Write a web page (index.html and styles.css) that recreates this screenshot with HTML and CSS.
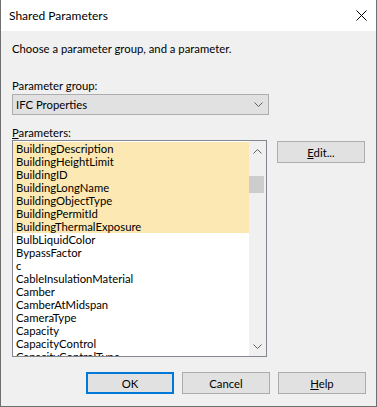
FILE: index.html
```html
<!DOCTYPE html>
<html lang="en">
<head>
    <meta charset="utf-8">
    <title>Shared Parameters</title>
    <link rel="stylesheet" href="styles.css">
</head>
<body>
    <div class="window">
        <header class="titlebar">
            <span class="title">Shared Parameters</span>
            <svg class="close" width="11" height="11" viewBox="0 0 11 11">
                <path d="M0.5 0.5 L10.5 10.5 M10.5 0.5 L0.5 10.5" stroke="#000" stroke-width="1" fill="none"/>
            </svg>
        </header>

        <main class="content">
            <p class="prompt">Choose a parameter group, and a parameter.</p>

            <label class="caption group-caption">Parameter <u>g</u>roup:</label>
            <div class="select">
                <span>IFC Properties</span>
                <svg width="9" height="5" viewBox="0 0 9 5">
                    <path d="M0.5 0.5 L4.5 4.5 L8.5 0.5" stroke="#606060" fill="none"/>
                </svg>
            </div>

            <label class="caption list-caption"><u>P</u>arameters:</label>
            <div class="row">
                <div class="listbox">
                    <ul class="items">
                        <li class="sel">BuildingDescription</li>
                        <li class="sel">BuildingHeightLimit</li>
                        <li class="sel">BuildingID</li>
                        <li class="sel">BuildingLongName</li>
                        <li class="sel">BuildingObjectType</li>
                        <li class="sel">BuildingPermitId</li>
                        <li class="sel">BuildingThermalExposure</li>
                        <li>BulbLiquidColor</li>
                        <li>BypassFactor</li>
                        <li>c</li>
                        <li>CableInsulationMaterial</li>
                        <li>Camber</li>
                        <li>CamberAtMidspan</li>
                        <li>CameraType</li>
                        <li>Capacity</li>
                        <li>CapacityControl</li>
                        <li>CapacityControlType</li>
                    </ul>
                    <div class="scrollbar">
                        <svg class="arrow" width="9" height="5" viewBox="0 0 9 5">
                            <path d="M0.5 4.5 L4.5 0.5 L8.5 4.5" stroke="#606060" fill="none"/>
                        </svg>
                        <div class="track"><div class="thumb"></div></div>
                        <svg class="arrow" width="9" height="5" viewBox="0 0 9 5">
                            <path d="M0.5 0.5 L4.5 4.5 L8.5 0.5" stroke="#606060" fill="none"/>
                        </svg>
                    </div>
                </div>
                <button class="btn edit"><u>E</u>dit...</button>
            </div>

            <div class="buttons">
                <button class="btn default">OK</button>
                <button class="btn">Cancel</button>
                <button class="btn"><u>H</u>elp</button>
            </div>
        </main>
    </div>
</body>
</html>
```

FILE: styles.css
```css
* {
    box-sizing: border-box;
}

body {
    margin: 0;
    font-family: 'Lato', 'Liberation Sans', sans-serif;
    font-size: 11.3px;
    color: #000;
}

.window {
    width: 377px;
    height: 407px;
    background-color: #f0f0f0;
    border: 1px solid #6f6f6f;
    border-top: none;
    display: flex;
    flex-direction: column;
}

.titlebar {
    height: 31px;
    background-color: #fff;
    display: flex;
    align-items: center;
    justify-content: space-between;
    padding: 0 9px 0 8px;
    font-size: 12px;
}

.close {
    display: block;
    margin-top: -1px;
}

.content {
    padding: 10px 10px 0 11px;
    display: flex;
    flex-direction: column;
}

.prompt {
    margin: 0;
    line-height: 15px;
}

.caption {
    display: block;
    line-height: 15px;
}

.group-caption {
    margin-top: 22px;
}

.list-caption {
    margin-top: 10px;
}

.select {
    margin-top: 1px;
    width: 257px;
    height: 21px;
    border: 1px solid #adadad;
    background-color: #e1e1e1;
    display: flex;
    align-items: center;
    justify-content: space-between;
    padding: 0 5px 0 3px;
}

.row {
    display: flex;
    align-items: flex-start;
    gap: 10px;
}

.listbox {
    width: 255px;
    height: 217px;
    border: 1px solid #828790;
    background-color: #fff;
    display: flex;
    overflow: hidden;
}

.items {
    list-style: none;
    margin: 0;
    padding: 1px 0 0 0;
    flex: 1;
}

.items li {
    line-height: 13px;
    height: 13px;
    padding-left: 3px;
    white-space: nowrap;
}

.items .sel {
    background-color: #fce8b2;
}

.scrollbar {
    width: 17px;
    background-color: #f0f0f0;
    display: flex;
    flex-direction: column;
    align-items: center;
    padding: 8px 0 7px 0;
}

.track {
    flex: 1;
    width: 100%;
    padding-top: 22px;
}

.thumb {
    width: 15px;
    height: 17px;
    background-color: #cdcdcd;
}

.btn {
    font-family: inherit;
    font-size: 11.3px;
    color: #000;
    width: 88px;
    height: 22px;
    padding: 0;
    background-color: #e1e1e1;
    border: 1px solid #adadad;
}

.edit {
    margin-top: 1px;
}

.buttons {
    margin-top: 15px;
    display: flex;
    justify-content: flex-end;
    gap: 8px;
}

.default {
    border: 2px solid #0078d7;
}
```
